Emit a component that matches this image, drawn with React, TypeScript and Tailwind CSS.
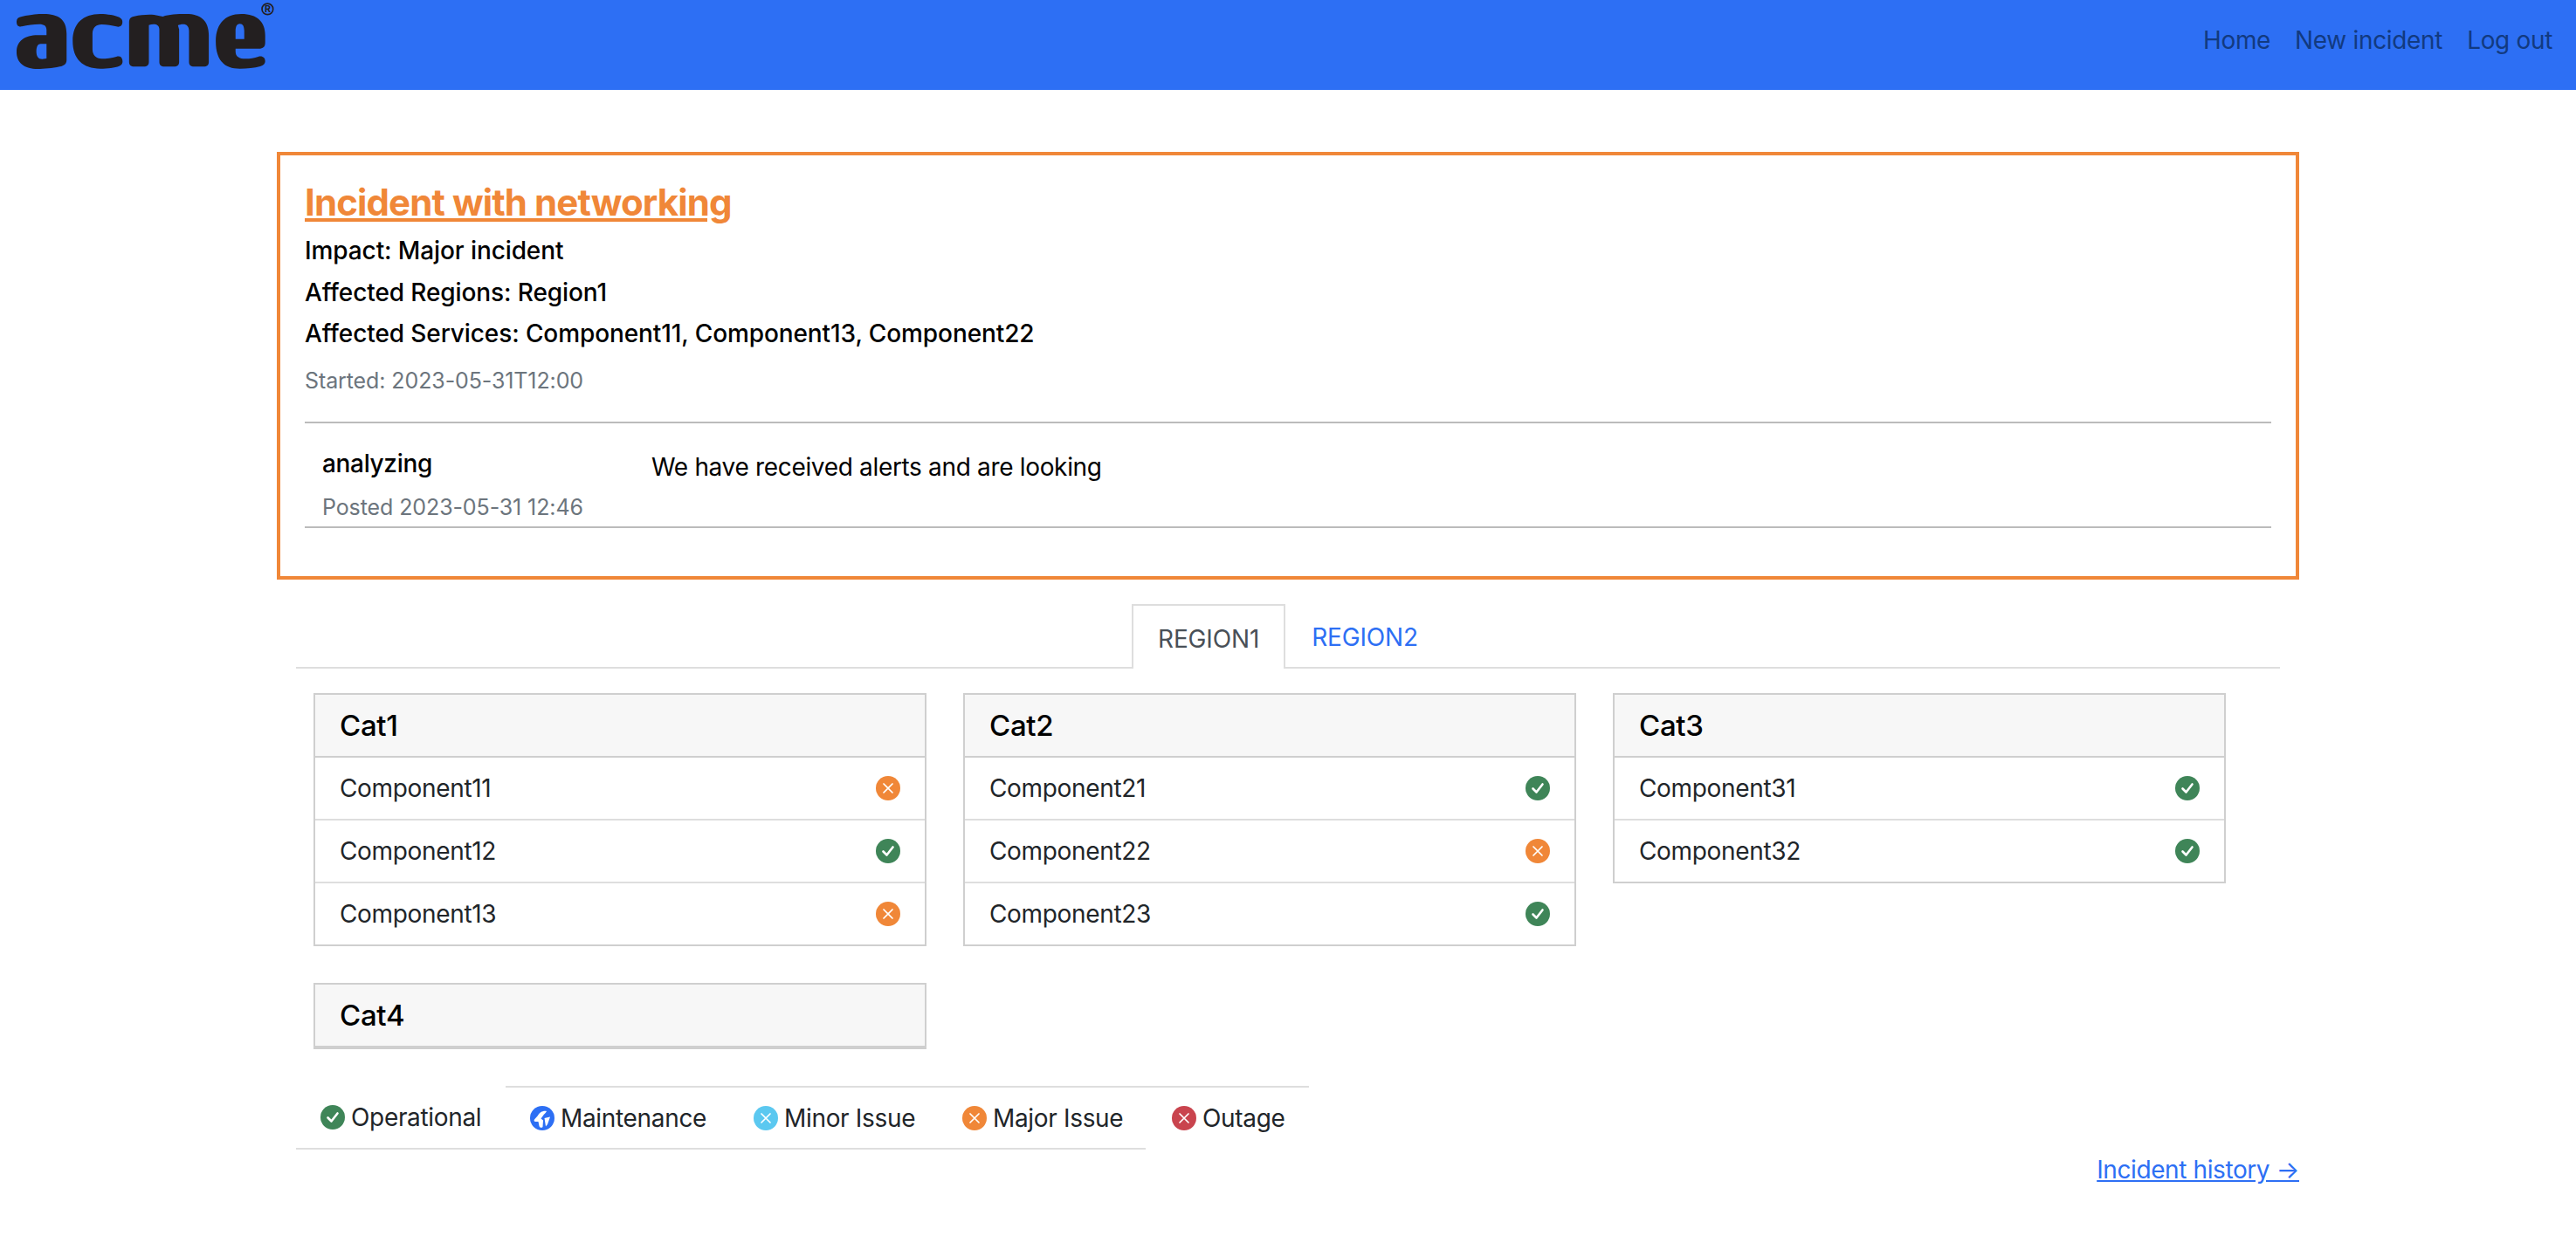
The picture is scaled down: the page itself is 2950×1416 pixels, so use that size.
import React from "react";

type Status = "ok" | "major" | "minor" | "outage" | "maint";

function StatusIcon({ status }: { status: Status }) {
  const fill = {
    ok: "#3f8558",
    major: "#f08738",
    minor: "#5bc8f0",
    outage: "#c9444e",
    maint: "#2d6ff4",
  }[status];
  return (
    <svg viewBox="0 0 28 28" className="w-[28px] h-[28px] shrink-0 block">
      <circle cx="14" cy="14" r="14" fill={fill} />
      {status === "ok" && (
        <path d="M8.5 14.5 L12.5 18.5 L19.5 9.5" fill="none" stroke="#fff" strokeWidth="2.6" strokeLinecap="round" strokeLinejoin="round" />
      )}
      {(status === "major" || status === "minor" || status === "outage") && (
        <path d="M9 9 L19 19 M19 9 L9 19" fill="none" stroke="#fff" strokeWidth="1.7" strokeLinecap="round" />
      )}
      {status === "maint" && (
        <g fill="#fff">
          <path d="M19 6 C15 5 10.5 7.5 9 11 L5 15.5 C4 17 5 18 6 18 L9.5 18 L10.5 23 C11 25 13.5 25.5 14.5 24 L15 16.5 L12.5 14.5 L15 11 C16 9.5 18 8 19 6 Z" />
          <path d="M16.5 14 L23 12.5 L20 21 L18 23.5 Z" />
        </g>
      )}
    </svg>
  );
}

function Logo() {
  return (
    <svg viewBox="0 0 1000 330" className="w-[333px] h-[110px] block shrink-0" aria-label="acme">
      <g fill="#231f20" fillRule="evenodd">
        <path d="M75 66 C110 58 130 57 150 57 C200 57 229 75 229 125 L229 215 C229 228 222 234 205 238 C180 244 150 246 130 246 C85 246 57 225 57 188 C57 150 85 130 130 130 L160 130 L160 112 C160 98 152 92 135 92 C115 92 95 95 75 100 C62 102 57 95 57 83 C57 73 63 68 75 66 Z M160 160 L140 160 C130 160 125 170 125 185 C125 203 132 212 145 212 L160 210 Z" />
        <path d="M410 68 C395 62 370 57 345 57 C285 57 250 90 250 150 C250 212 285 245 345 245 C370 245 395 242 410 236 C420 232 423 225 421 215 C419 205 412 200 400 204 C385 208 365 211 350 211 C330 211 318 198 318 178 L318 125 C318 105 330 93 350 93 C368 93 385 96 400 100 C412 103 420 98 421 87 C422 78 418 72 410 68 Z" />
        <path d="M444 85 C444 72 450 67 462 65 C485 60 510 58 530 60 L560 66 C580 58 610 57 640 57 C690 57 718 80 718 130 L718 222 C718 232 712 238 700 238 L668 238 C656 238 650 232 650 222 L650 115 C650 100 642 92 630 92 C622 92 616 94 612 96 L616 110 L616 222 C616 232 610 238 598 238 L566 238 C554 238 548 232 548 222 L548 110 C548 98 540 92 528 92 C522 92 517 93 512 95 L512 222 C512 232 506 238 494 238 L462 238 C450 238 444 232 444 222 Z" />
        <path d="M742 150 C742 90 775 57 830 57 C885 57 912 85 912 130 L912 155 C912 170 905 176 890 176 L810 176 L810 185 C810 203 822 211 845 211 C860 211 875 208 888 204 C902 200 912 207 912 220 C912 228 906 234 895 237 C875 243 850 245 825 245 C770 245 742 215 742 150 Z M810 143 L840 143 L840 115 C840 100 835 91 825 91 C815 91 810 100 810 115 Z" />
      </g>
      <circle cx="920" cy="40" r="19" fill="none" stroke="#231f20" strokeWidth="5" />
      <text x="920" y="52" textAnchor="middle" fontSize="32" fontWeight="700" fill="#231f20" fontFamily="Inter, sans-serif">R</text>
    </svg>
  );
}

const cats: { name: string; items: [string, Status][] }[] = [
  { name: "Cat1", items: [["Component11", "major"], ["Component12", "ok"], ["Component13", "major"]] },
  { name: "Cat2", items: [["Component21", "ok"], ["Component22", "major"], ["Component23", "ok"]] },
  { name: "Cat3", items: [["Component31", "ok"], ["Component32", "ok"]] },
  { name: "Cat4", items: [] },
];

function Card({ name, items }: { name: string; items: [string, Status][] }) {
  return (
    <div className="w-[702px] self-start border-2 border-[#cfcfcf] bg-white">
      <div className="h-[72px] flex items-center px-[28px] pt-[1px] bg-[#f7f7f7] text-[33px] font-medium tracking-[-0.3px] text-black border-b-2 border-[#cfcfcf]">
        {name}
      </div>
      {items.map(([label, st], i) => (
        <div
          key={label}
          className={
            i === 0
              ? "h-[70px] flex items-center justify-between px-[28px] text-[#212529]"
              : "h-[72px] flex items-center justify-between px-[28px] text-[#212529] border-t-2 border-[#dedede]"
          }
        >
          <span>{label}</span>
          <StatusIcon status={st} />
        </div>
      ))}
    </div>
  );
}

const legend: { label: string; st: Status; cls: string }[] = [
  { label: "Operational", st: "ok", cls: "w-[240px] pl-[28px] border-b-2 border-[#dedede]" },
  { label: "Maintenance", st: "maint", cls: "w-[256px] pl-[28px] border-y-2 border-[#dedede]" },
  { label: "Minor Issue", st: "minor", cls: "w-[239px] pl-[28px] border-y-2 border-[#dedede]" },
  { label: "Major Issue", st: "major", cls: "w-[238px] pl-[28px] border-y-2 border-[#dedede]" },
  { label: "Outage", st: "outage", cls: "w-[187px] pl-[30px] border-t-2 border-[#dedede] pb-[2px]" },
];

export default function App() {
  return (
    <div className="w-[2950px] h-[1416px] overflow-hidden bg-white text-[#212529] text-[28px] tracking-[-0.33px] font-['Inter',sans-serif]">
      <header className="h-[103px] bg-[#2d6ff4] flex items-center justify-between pr-[27px]">
        <Logo />
        <nav className="flex gap-[28px] text-[#123a80] -mt-[12px]">
          <span>Home</span>
          <span>New incident</span>
          <span>Log out</span>
        </nav>
      </header>

      <main className="w-[2316px] mx-auto">
        <section className="mt-[71px] h-[490px] border-[4px] border-[#f08738] pt-[30px] px-[28px]">
          <h2 className="h-[48px] leading-[48px] text-[42px] font-bold tracking-[-0.9px] text-[#f08738] underline">Incident with networking</h2>
          <div className="mt-[8px] text-black font-medium tracking-[-0.1px]">
            <p className="h-[47px] leading-[47px]">Impact: Major incident</p>
            <p className="h-[48px] leading-[48px]">Affected Regions: Region1</p>
            <p className="h-[47px] leading-[47px]">Affected Services: Component11, Component13, Component22</p>
          </div>
          <p className="mt-[6px] h-[48px] leading-[48px] text-[25px] tracking-[-0.1px] text-[#6c757d]">Started: 2023-05-31T12:00</p>
          <div className="mt-[23px] border-y-2 border-[#bbbbbb] h-[122px] flex pl-[20px]">
            <div className="w-[377px]">
              <p className="mt-[25px] h-[42px] leading-[42px] text-black font-medium">analyzing</p>
              <p className="mt-[8px] leading-[42px] text-[25px] tracking-[-0.1px] text-[#6c757d]">Posted 2023-05-31 12:46</p>
            </div>
            <p className="mt-[29px] h-[42px] leading-[42px] text-black">We have received alerts and are looking</p>
          </div>
        </section>

        <div className="mt-[28px] mx-[22px] flex justify-center border-b-2 border-[#dedede] h-[74px] tracking-[-0.15px]">
          <div className="px-[28px] pt-[3px] h-[74px] flex items-center border-2 border-b-0 border-[#dedede] bg-white text-[#495057]">REGION1</div>
          <div className="px-[30px] pt-[3px] h-[72px] flex items-center text-[#2d6ff4]">REGION2</div>
        </div>

        <div className="mt-[28px] ml-[42px] flex flex-wrap gap-[42px]">
          {cats.map((c) => (
            <Card key={c.name} name={c.name} items={c.items} />
          ))}
        </div>

        <ul className="mt-[42px] ml-[22px] flex h-[73px]">
          {legend.map((l) => (
            <li key={l.label} className={`flex items-center gap-[7px] ${l.cls}`}>
              <StatusIcon status={l.st} />
              <span>{l.label}</span>
            </li>
          ))}
        </ul>

        <div className="mt-[2px] flex justify-end">
          <span className="text-[#2d6ff4] underline tracking-[-0.4px]">Incident history →</span>
        </div>
      </main>
    </div>
  );
}
